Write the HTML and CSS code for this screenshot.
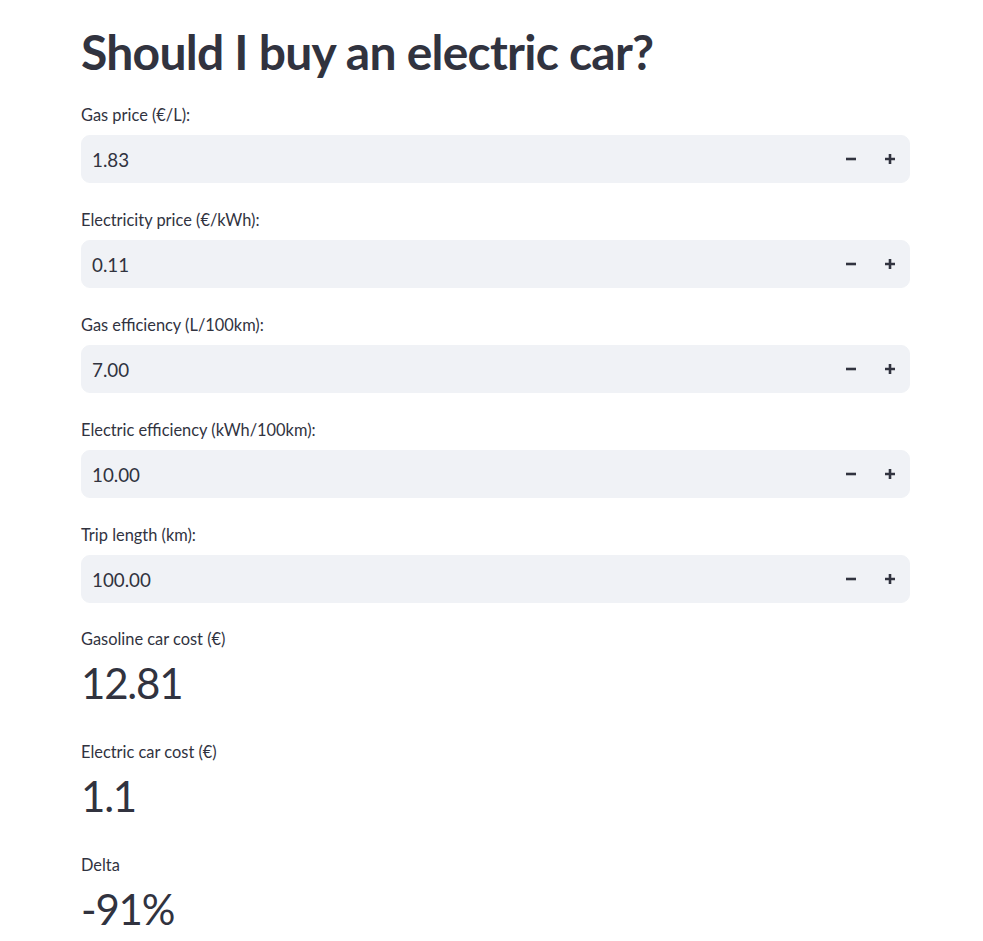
FILE: index.html
```html
<!DOCTYPE html>
<html>
<head>
<meta charset="utf-8">
<link rel="stylesheet" href="styles.css">
</head>
<body>
<main class="main">
  <h1 class="title">Should I buy an electric car?</h1>
  <div class="fields">
    <div class="field">
      <label class="field-label">Gas price (€/L):</label>
      <div class="input">
        <span class="input-value">1.83</span>
        <button class="step"><svg viewBox="0 0 10 10" width="10" height="10"><path d="M0 5h10" /></svg></button>
        <button class="step"><svg viewBox="0 0 10 10" width="10" height="10"><path d="M0 5h10M5 0v10" /></svg></button>
      </div>
    </div>
    <div class="field">
      <label class="field-label">Electricity price (€/kWh):</label>
      <div class="input">
        <span class="input-value">0.11</span>
        <button class="step"><svg viewBox="0 0 10 10" width="10" height="10"><path d="M0 5h10" /></svg></button>
        <button class="step"><svg viewBox="0 0 10 10" width="10" height="10"><path d="M0 5h10M5 0v10" /></svg></button>
      </div>
    </div>
    <div class="field">
      <label class="field-label">Gas efficiency (L/100km):</label>
      <div class="input">
        <span class="input-value">7.00</span>
        <button class="step"><svg viewBox="0 0 10 10" width="10" height="10"><path d="M0 5h10" /></svg></button>
        <button class="step"><svg viewBox="0 0 10 10" width="10" height="10"><path d="M0 5h10M5 0v10" /></svg></button>
      </div>
    </div>
    <div class="field">
      <label class="field-label">Electric efficiency (kWh/100km):</label>
      <div class="input">
        <span class="input-value">10.00</span>
        <button class="step"><svg viewBox="0 0 10 10" width="10" height="10"><path d="M0 5h10" /></svg></button>
        <button class="step"><svg viewBox="0 0 10 10" width="10" height="10"><path d="M0 5h10M5 0v10" /></svg></button>
      </div>
    </div>
    <div class="field">
      <label class="field-label">Trip length (km):</label>
      <div class="input">
        <span class="input-value">100.00</span>
        <button class="step"><svg viewBox="0 0 10 10" width="10" height="10"><path d="M0 5h10" /></svg></button>
        <button class="step"><svg viewBox="0 0 10 10" width="10" height="10"><path d="M0 5h10M5 0v10" /></svg></button>
      </div>
    </div>
  </div>
  <div class="metrics">
    <div class="metric">
      <div class="metric-label">Gasoline car cost (€)</div>
      <div class="metric-value">12.81</div>
    </div>
    <div class="metric">
      <div class="metric-label">Electric car cost (€)</div>
      <div class="metric-value">1.1</div>
    </div>
    <div class="metric">
      <div class="metric-label">Delta</div>
      <div class="metric-value">-91%</div>
    </div>
  </div>
</main>
</body>
</html>
```

FILE: styles.css
```css
html, body {
  margin: 0;
  padding: 0;
  background: #ffffff;
}
body {
  font-family: Lato, "Noto Sans", sans-serif;
  color: #31333f;
}
.main {
  width: 829px;
  margin-left: 81px;
  padding-top: 20px;
}
.title {
  margin: 0 0 19px 0;
  font-size: 48px;
  line-height: 63px;
  font-weight: 700;
  letter-spacing: -0.75px;
}
.fields {
  display: flex;
  flex-direction: column;
  gap: 24px;
}
.field {
  display: flex;
  flex-direction: column;
}
.field-label {
  font-size: 16.4px;
  line-height: 26px;
  margin-bottom: 7px;
}
.input {
  height: 48px;
  box-sizing: border-box;
  background: #f0f2f6;
  border: 1px solid #f0f2f6;
  border-radius: 9px;
  display: flex;
  align-items: center;
}
.input-value {
  flex: 1;
  padding-left: 10px;
  font-size: 18.8px;
}
.step {
  width: 39px;
  height: 46px;
  border: 0;
  background: transparent;
  padding: 0;
  display: flex;
  align-items: center;
  justify-content: center;
  color: #31333f;
}
.step svg path {
  stroke: #31333f;
  stroke-width: 2.6;
  fill: none;
}
.metrics {
  margin-top: 23px;
  display: flex;
  flex-direction: column;
  gap: 25px;
}
.metric-label {
  font-size: 16.4px;
  line-height: 26px;
}
.metric-value {
  font-size: 42px;
  line-height: 62px;
  letter-spacing: -1.2px;
}
```
